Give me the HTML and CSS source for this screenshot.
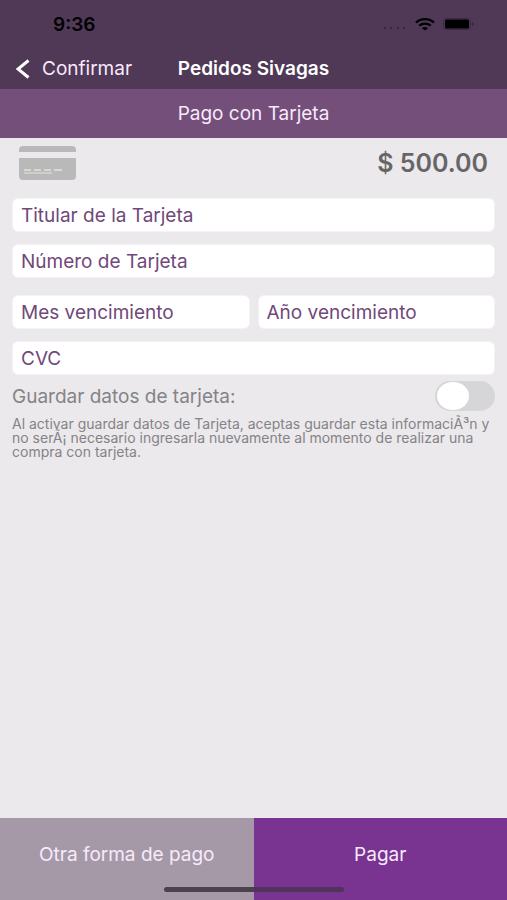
FILE: index.html
```html
<!DOCTYPE html>
<html lang="es">
<head>
    <meta charset="UTF-8">
    <meta name="viewport" content="width=device-width, initial-scale=1.0">
    <title>Pedidos Sivagas</title>
    <link rel="stylesheet" href="styles.css">
</head>
<body>
    <header>
        <div class="status-bar">
            <span class="time">9:36</span>
            <div class="status-icons">
                <svg width="25" height="4" viewBox="0 0 25 4" fill="#3c2843">
                    <circle cx="3" cy="2" r="1.2"/>
                    <circle cx="9" cy="2" r="1.2"/>
                    <circle cx="16" cy="2" r="1.2"/>
                    <circle cx="22" cy="2" r="1.2"/>
                </svg>
                <svg width="20" height="13" viewBox="0 0 20 13" fill="none" stroke="#000" stroke-width="2.2">
                    <path d="M1 4.6C6 0 14 0 19 4.6"/>
                    <path d="M4.3 7.7C7.6 4.8 12.4 4.8 15.7 7.7"/>
                    <path d="M7 10.2C8.8 8.7 11.2 8.7 13 10.2L10 12.6Z" fill="#000" stroke="none"/>
                </svg>
                <svg width="32" height="12" viewBox="0 0 32 12">
                    <rect x="0.5" y="0.5" width="27" height="11" rx="3" fill="none" stroke="#3c2843"/>
                    <rect x="2" y="1.5" width="24" height="9" rx="1.5" fill="#000"/>
                    <path d="M29 4C31.5 4.5 31.5 7.5 29 8Z" fill="#3c2843"/>
                </svg>
            </div>
        </div>
        <nav class="nav-bar">
            <a class="back" href="#">
                <svg width="14" height="20" viewBox="0 0 14 20" fill="none" stroke="#fff" stroke-width="3">
                    <path d="M12.5 1.5L2 10L12.5 18.5"/>
                </svg>
                Confirmar
            </a>
            <h1>Pedidos Sivagas</h1>
        </nav>
        <h2>Pago con Tarjeta</h2>
    </header>

    <main>
        <div class="summary">
            <svg width="57" height="34" viewBox="0 0 57 34">
                <path d="M0 6V4Q0 0 4 0H53Q57 0 57 4V6Z" fill="#b9b9b9"/>
                <path d="M0 12H57V30Q57 34 53 34H4Q0 34 0 30Z" fill="#b9b9b9"/>
                <path d="M5 24H12M15 24H22M25 24H32M35 24H43" stroke="#d8d8d4" stroke-width="2"/>
                <path d="M5 27H33" stroke="#d0d0ca" stroke-width="2"/>
            </svg>
            <span class="total">$ 500.00</span>
        </div>

        <form id="card-form">
            <input class="field" type="text" placeholder="Titular de la Tarjeta" aria-label="Titular de la Tarjeta">
            <input class="field" type="text" inputmode="numeric" placeholder="Número de Tarjeta" aria-label="Número de Tarjeta">
            <div class="expiry">
                <input class="field" type="text" inputmode="numeric" placeholder="Mes vencimiento" aria-label="Mes vencimiento">
                <input class="field" type="text" inputmode="numeric" placeholder="Año vencimiento" aria-label="Año vencimiento">
            </div>
            <input class="field" type="text" inputmode="numeric" placeholder="CVC" aria-label="CVC">
            <div class="save-card">
                <label for="save">Guardar datos de tarjeta:</label>
                <input class="switch" type="checkbox" id="save">
            </div>
        </form>
        <p class="note">Al activar guardar datos de Tarjeta, aceptas guardar esta informaciÃ³n y no serÃ¡ necesario ingresarla nuevamente al momento de realizar una compra con tarjeta.</p>
    </main>

    <footer>
        <button class="other" type="button">Otra forma de pago</button>
        <button class="pay" type="submit" form="card-form">Pagar</button>
        <div class="home-indicator"></div>
    </footer>
</body>
</html>
```
FILE: styles.css
```css
* {
    box-sizing: border-box;
}

body {
    margin: 0;
    min-height: 100vh;
    display: flex;
    flex-direction: column;
    font-family: Inter, "Liberation Sans", sans-serif;
    font-size: 19px;
    background-color: #ebe9ec;
}

header {
    background-color: #503857;
    color: #f8e9fb;
}

.status-bar {
    display: flex;
    align-items: center;
    justify-content: space-between;
    height: 48px;
    padding: 0 32px 0 53px;
}

.time {
    font-weight: 600;
    color: #000;
}

.status-icons {
    display: flex;
    align-items: center;
    gap: 8px;
}

.status-icons svg:first-child {
    margin-top: 8px;
}

/* the title stays centered whatever the back link's width */
.nav-bar {
    display: grid;
    grid-template-columns: 1fr auto 1fr;
    align-items: center;
    height: 41px;
    padding: 0 16px;
}

.back {
    display: flex;
    align-items: center;
    gap: 12px;
    color: inherit;
    text-decoration: none;
}

h1 {
    margin: 0;
    font-size: 19px;
    font-weight: 600;
    color: #fff;
}

h2 {
    margin: 0;
    font-size: 19px;
    font-weight: 400;
    line-height: 49px;
    text-align: center;
    background-color: #734f7a;
}

main {
    flex: 1;
    padding: 0 12px;
}

.summary {
    display: flex;
    align-items: center;
    justify-content: space-between;
    height: 50px;
    padding: 0 7px;
    margin-bottom: 10px;
}

.total {
    font-size: 25px;
    font-weight: 600;
    color: #666;
}

form {
    display: flex;
    flex-direction: column;
    gap: 12px;
}

.field {
    width: 100%;
    height: 34px;
    padding: 0 8px;
    border: 1px solid #f3f2f4;
    border-radius: 6px;
    background-color: #fff;
    font-family: inherit;
    font-size: 19px;
    color: #70487a;
}

.field::placeholder {
    color: #70487a;
    opacity: 1;
}

.expiry {
    display: flex;
    gap: 8px;
    margin-top: 5px;
}

.save-card {
    display: flex;
    align-items: center;
    justify-content: space-between;
    margin-top: -6px;
    color: #858387;
}

.switch {
    appearance: none;
    display: flex;
    width: 60px;
    height: 30px;
    margin: 0;
    padding: 1px 2px;
    border-radius: 15px;
    background-color: #d6d5d8;
    cursor: pointer;
}

.switch::before {
    content: "";
    width: 32px;
    height: 28px;
    border-radius: 50%;
    background-color: #fff;
}

.switch:checked {
    justify-content: flex-end;
    background-color: #783490;
}

.note {
    margin: 6px 0 0;
    font-size: 14px;
    line-height: 14px;
    color: #858387;
}

footer {
    position: relative;
    display: flex;
    height: 82px;
}

footer button {
    flex: 1;
    padding: 0 0 9px;
    border: none;
    font-family: inherit;
    font-size: 19px;
    color: #f8e9fb;
    cursor: pointer;
}

.other {
    background-color: #a599a8;
}

.pay {
    background-color: #783490;
}

.home-indicator {
    position: absolute;
    bottom: 8px;
    left: 50%;
    width: 180px;
    height: 5px;
    border-radius: 3px;
    background: linear-gradient(90deg, #4c424f 50%, #50345c 50%);
    transform: translateX(-50%);
}
```
